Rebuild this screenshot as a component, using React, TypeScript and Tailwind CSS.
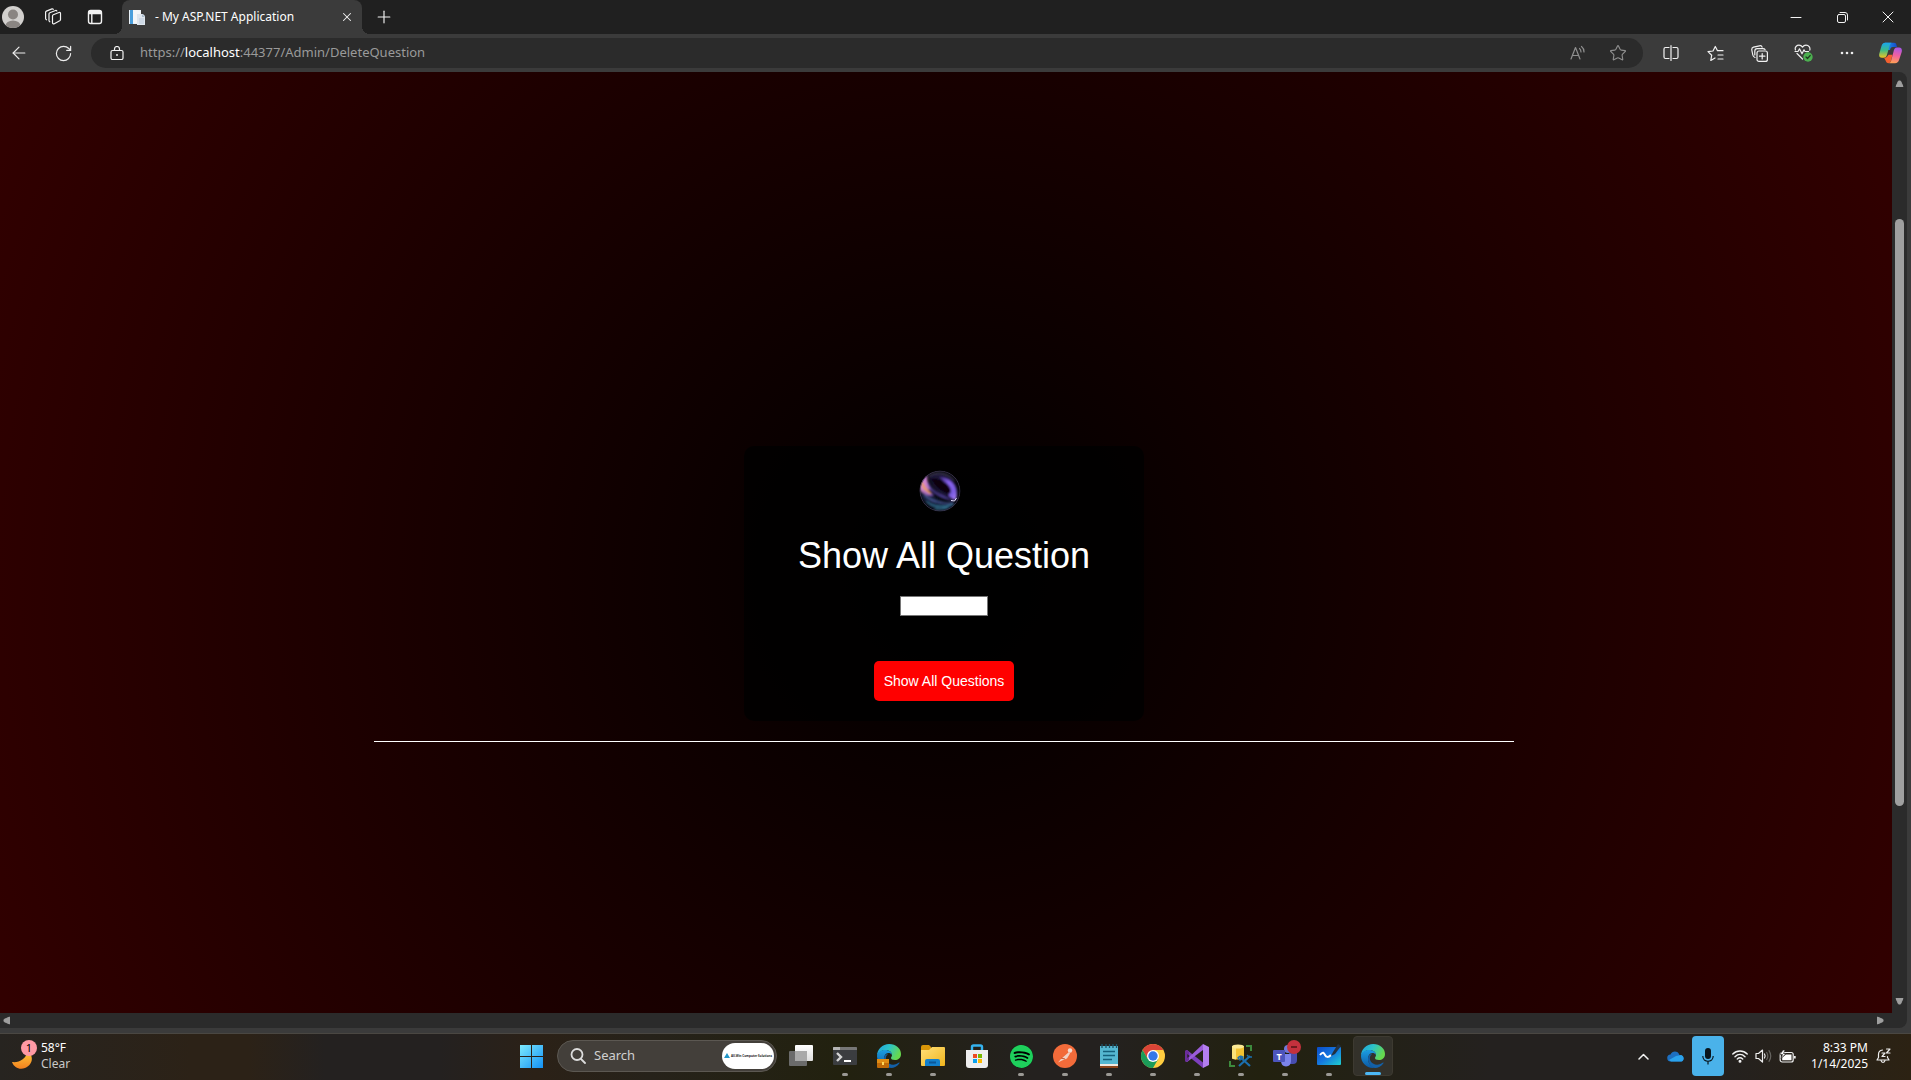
import React from 'react';
import { ArrowLeft, RotateCw, Plus, X, Star } from 'lucide-react';
import { SiSpotify } from 'react-icons/si';

const Svg = ({ children, size = 16, box = 24, color = '#f2f2f2', w = 1.5 }: { children: React.ReactNode; size?: number; box?: number; color?: string; w?: number }) => (
  <svg width={size} height={size} viewBox={`0 0 ${box} ${box}`} fill="none" stroke={color} strokeWidth={w} strokeLinecap="round" strokeLinejoin="round" className="block shrink-0">
    {children}
  </svg>
);

const barButton = 'flex h-full w-11 shrink-0 items-center justify-center text-[#f2f2f2]';

function TitleBar() {
  return (
    <header className="flex h-[34px] bg-[#202020] pr-px">
      <button aria-label="Profile" className="flex w-[26px] items-center justify-center">
        <svg width="22" height="22" viewBox="0 0 22 22" className="block">
          <defs><clipPath id="face"><circle cx="11" cy="11" r="11" /></clipPath></defs>
          <g clipPath="url(#face)">
            <rect width="22" height="22" fill="#d2d0ce" />
            <circle cx="11" cy="8.5" r="5" fill="#8a8582" />
            <ellipse cx="11" cy="20" rx="7.5" ry="5.5" fill="#8a8582" />
          </g>
        </svg>
      </button>
      <button aria-label="Workspaces" className="flex w-[54px] items-center justify-center">
        <Svg size={18} box={18} w={1.2}>
          <path d="M8.500 8c0-.6.300-1 .8-1.200l5.700-2.300c.8-.3 1.500.1 1.500.9v6c0 .6-.300 1-.8 1.300l-5.400 3c-.9.4-1.800 0-1.800-1z" />
          <path d="M5.800 13.800c-.6-.3-.8-.7-.8-1.300V6c0-.6.300-1 .8-1.200l5.700-2.300c.6-.2 1 0 1.300.4M2.500 11.800c-.6-.3-.9-.7-.9-1.300V4.300c0-.6.300-1 .8-1.200L8 .9c.6-.2 1 0 1.300.4" />
        </Svg>
      </button>
      <button aria-label="Tab actions" className="flex w-[30px] items-center justify-center">
        <Svg size={16} box={16} w={1.4}>
          <rect x="1.5" y="1.5" width="13" height="13" rx="2.2" />
          <path d="M2 2.5h12v2H2z" fill="#f2f2f2" />
          <path d="M4.800 5v9" />
        </Svg>
      </button>
      <div className="relative ml-3 flex w-60 items-center rounded-t-lg bg-[#3b3b3b] pr-2 pl-[7px]">
        <span className="absolute bottom-0 -left-2 size-2 bg-[radial-gradient(circle_at_0_0,#202020_8px,#3b3b3b_8px)]" />
        <span className="absolute -right-2 bottom-0 size-2 bg-[radial-gradient(circle_at_100%_0,#202020_8px,#3b3b3b_8px)]" />
        <svg width="17" height="17" viewBox="0 0 17 17" className="shrink-0">
          <rect x="0" y="1" width="12" height="14" fill="#e9f1f8" />
          <rect x="1" y="1" width="3" height="14" fill="#4a9edb" />
          <path d="M4 1h6l2 2v11H4z" fill="#f4f6f8" />
          <path d="M8 5h6l2 2v9H8z" fill="#dfe6ee" />
          <path d="M13 5v3h3z" fill="#a9bccd" />
          <path d="M10 10h5M10 12h5M10 14h5" stroke="#bccbdc" />
        </svg>
        <span className="ml-[9px] flex-1 text-xs whitespace-pre text-white">- My ASP.NET Application</span>
        <button aria-label="Close tab" className="text-[#f2f2f2]"><X size={14} strokeWidth={1.8} /></button>
      </div>
      <button aria-label="New tab" className={barButton}><Plus size={20} strokeWidth={1.4} /></button>
      <div className="ml-auto flex">
        <button aria-label="Minimize" className={barButton}><Svg size={12} box={12} w={1}><path d="M1 6.500h10" /></Svg></button>
        <button aria-label="Restore" className="flex h-full w-12 items-center justify-center">
          <Svg size={11} box={11} w={1}><rect x=".5" y="2.500" width="8" height="8" rx="1.500" /><path d="M3 .5h5a2.500 2.500 0 0 1 2.500 2.500v5" /></Svg>
        </button>
        <button aria-label="Close" className={barButton}><Svg size={12} box={12} w={1}><path d="m1 1 10 10M11 1 1 11" /></Svg></button>
      </div>
    </header>
  );
}

function Copilot() {
  return (
    <svg width="23" height="22" viewBox="0 0 23 22" className="block">
      <defs>
        <linearGradient id="cpa" x1="0" y1="0" x2="0" y2="1"><stop stopColor="#18a5ee" /><stop offset=".5" stopColor="#3dbb86" /><stop offset="1" stopColor="#eec421" /></linearGradient>
        <linearGradient id="cpb" x1=".6" y1="0" x2=".4" y2="1"><stop stopColor="#a957e8" /><stop offset=".5" stopColor="#f0609e" /><stop offset="1" stopColor="#ff9f56" /></linearGradient>
        <linearGradient id="cpc" x1="0" y1="0" x2="1" y2="0"><stop stopColor="#1fa4f0" /><stop offset="1" stopColor="#1546c8" /></linearGradient>
      </defs>
      <path d="M6 .7h9c2 0 2.500 1.500 3 4.300h-4c-2 0-2.500 1-3 3H8z" fill="url(#cpc)" />
      <path d="M6 .7h6.500c-1.500 1-2 3-2.500 5l-2 7c-.5 2-1.500 3-3.500 3H3C.5 15.700-.3 14 .3 11.500L2.500 4C3 2 4 .7 6 .7z" fill="url(#cpa)" />
      <path d="M5 15.700c3 0 3.500-1.500 4.500-3h4l-1.500 6c-.5 1.700-1.500 2.500-2.500 2.500-2.500 0-2.500-3-4.500-5.500z" fill="#f4602f" />
      <path d="M18 5.500h2c2.500 0 3.300 2 2.700 4.500l-2.500 7.500c-.8 2.500-2 3.700-4.200 3.700h-6c1.500-.5 2-2 2.500-4l2-7.500c.5-2.200 1.200-4.200 3.500-4.200z" fill="url(#cpb)" />
    </svg>
  );
}

function Toolbar() {
  return (
    <nav className="flex h-[38px] items-center bg-[#3b3b3b]">
      <button aria-label="Back" className="flex w-[38px] justify-center text-[#eee]"><ArrowLeft size={20} strokeWidth={1.4} /></button>
      <button aria-label="Reload" className="flex w-[50px] justify-center text-[#eee]"><RotateCw size={19} strokeWidth={1.5} /></button>
      <div className="ml-[3px] flex h-[30px] flex-1 items-center rounded-full bg-[#2b2b2b] pr-4 pl-[19px]">
        <Svg size={14} box={14} w={1.2}>
          <rect x="1" y="4.500" width="12" height="9" rx="1.500" /><path d="M4.500 4.500V3a2.500 2.500 0 0 1 5 0v1.500" /><circle cx="7" cy="9" r=".4" />
        </Svg>
        <a href="#" className="ml-4 flex-1 text-[13px] text-[#9a9a9a]">https://<span className="text-white">localhost</span>:44377/Admin/DeleteQuestion</a>
        <button aria-label="Read aloud" className="mr-[23px]">
          <Svg size={16} box={16} color="#8f8f8f" w={1.200}><path d="M1 14 5.500 2.500 10 14M2.500 10.500h6M9.500 3.500c1 .8 1.500 2 1.500 3.500M11.500 1.500c1.700 1.300 2.500 3 2.500 5.500" /></Svg>
        </button>
        <button aria-label="Add to favorites" className="text-[#8f8f8f]"><Star size={18} strokeWidth={1.5} /></button>
      </div>
      <div className="flex items-center">
        <button aria-label="Split screen" className="ml-[6px] flex w-11 justify-center">
          <Svg size={16} box={16} w={1.200}><path d="M6 2.500H2.500A1.500 1.500 0 0 0 1 4v8a1.500 1.500 0 0 0 1.500 1.500H6M10 2.500h3.500A1.500 1.500 0 0 1 15 4v8a1.500 1.500 0 0 1-1.500 1.500H10M8 .6v14.800" /></Svg>
        </button>
        <button aria-label="Favorites" className="flex w-11 justify-center">
          <Svg size={17} box={17} w={1.200}><path d="M10.500 5.700 8.300 1.500 6 6 1 6.600l3.700 3.600-.9 5.300L8 13M10.500 5.700H16M11 10h5M11 14h5" /></Svg>
        </button>
        <button aria-label="Collections" className="flex w-11 justify-center">
          <Svg size={17} box={17} w={1.200}><rect x="6" y="6" width="10.400" height="10.400" rx="2" /><path d="M11.200 8.500v5.400M8.500 11.200h5.400M4 12.500C2.500 12 2 11 1.800 10L.8 5C.6 3.500 1 2.600 2.500 2.200L8.500.8c1.300-.3 2.300.2 2.600 1.400M3.800 10V6c0-1.600.9-2.400 2.400-2.400h5.500c1.200 0 2 .3 2.300 1" /></Svg>
        </button>
        <button aria-label="Browser essentials" className="flex w-11 justify-center">
          <svg width="19" height="18" viewBox="0 0 19 18" fill="none" stroke="#eee" strokeWidth="1.200" strokeLinecap="round" strokeLinejoin="round">
            <path d="M1.500 6C.3 3 3 1.200 5 1.200c1.600 0 2.700.8 3.500 2 .8-1.200 2-2 3.500-2 2.700 0 4.500 2.300 3.800 5M3 9.500l5.500 5.500M1 7.500h3l1.500-2.700 2.500 5 2-4 1 1.700h3.500" />
            <circle cx="14" cy="13" r="4.700" fill="#4caf50" stroke="none" /><path d="m12 13 1.500 1.500 2.700-3" stroke="#1e3b1f" />
          </svg>
        </button>
        <button aria-label="More" className="flex w-11 justify-center"><svg width="14" height="4" viewBox="0 0 14 4" fill="#eee"><circle cx="2" cy="2" r="1.300" /><circle cx="7" cy="2" r="1.300" /><circle cx="12" cy="2" r="1.300" /></svg></button>
        <button aria-label="Copilot" className="flex w-[42px] justify-center"><Copilot /></button>
      </div>
    </nav>
  );
}

function Orb() {
  return (
    <svg width="42" height="42" viewBox="0 0 42 42" className="block">
      <defs>
        <clipPath id="orb"><circle cx="21" cy="21" r="20.500" /></clipPath>
        <linearGradient id="oa" x1="0" y1="0" x2="1" y2="1"><stop stopColor="#3d2a78" /><stop offset=".4" stopColor="#8a62f4" /><stop offset=".75" stopColor="#7a5ce0" /><stop offset="1" stopColor="#b98cff" /></linearGradient>
        <linearGradient id="ob" x1="0" y1="0" x2="1" y2="1"><stop stopColor="#b878f0" /><stop offset=".4" stopColor="#d486c8" /><stop offset="1" stopColor="#6a48b8" /></linearGradient>
        <filter id="soft" x="-20%" y="-20%" width="140%" height="140%"><feGaussianBlur stdDeviation=".8" /></filter>
      </defs>
      <g clipPath="url(#orb)">
        <rect width="42" height="42" fill="#08080f" />
        <g filter="url(#soft)" fill="none" strokeLinecap="round">
          <path d="M10 6C18 1 29 4 34 10s5 14 3 20C26 29 13 20 10 6z" fill="#1b1538" />
          <path d="M20 7c8 0 15 5 17 12 1 4 1 9-1 11-2-1-4-2-6-4 1-8-4-15-10-19z" fill="url(#oa)" />
          <path d="M12 9c8-2 18 4 20 11 0 3-1 4-3 4-7-2-14-8-17-15z" fill="#070611" />
          <path d="M1 21c2 12 13 19 23 19 5 0 9-3 12-7-13 0-26-6-30-18z" fill="#182441" />
          <path d="M8 5C3 9 0 15 1 20l5 4c3 2 6 2 10 1-5-5-8-11-8-20z" fill="url(#ob)" />
          <path d="M3 13c1 4 4 7 8 10" stroke="#f0a04a" strokeWidth="2" />
          <path d="M9 13c3 9 13 13 24 18" stroke="#5c4ab0" strokeWidth="1.500" />
          <path d="M10 20c5 6 14 9 22 11" stroke="#0a0914" strokeWidth="1.500" />
          <path d="M6 25c6 7 18 9 28 8" stroke="#4d5c9c" strokeWidth="1.200" />
          <path d="M8 32c7 6 17 6 26 2M16 39c5 1 9 0 13-2" stroke="#3e8fae" />
          <path d="M10 6c7-5 18-4 25 4" stroke="#4e4a62" />
        </g>
        <path d="M32 30.500 35.500 31l2-3" stroke="#e8e4ff" strokeWidth="1" fill="none" />
        <circle cx="21" cy="21" r="20" fill="none" stroke="#4b415f" strokeWidth=".7" />
      </g>
    </svg>
  );
}

function Arrow({ className, d }: { className: string; d: string }) {
  return <svg width="9" height="9" viewBox="0 0 9 9" fill="#9f9f9f" stroke="#9f9f9f" strokeLinejoin="round" className={className}><path d={d} /></svg>;
}

function Page() {
  return (
    <div className="flex min-h-0 flex-1 flex-col bg-[#3b3b3b] pr-1 pb-[5px]">
      <div className="flex min-h-0 flex-1">
        <main className="flex flex-1 flex-col items-center bg-[radial-gradient(circle_1075px_at_50%_500px,#000,#300)] pt-[374px] pr-1 font-['Liberation_Sans',sans-serif]">
          <form className="flex w-[400px] flex-col items-center rounded-[10px] bg-black/80 px-5 pt-6 pb-5" onSubmit={(e) => e.preventDefault()}>
            <div className="mr-2"><Orb /></div>
            <h1 className="mt-6 text-4xl leading-10 text-white"><label htmlFor="question">Show All Question</label></h1>
            <input id="question" className="mt-5 h-5 w-[88px] border border-[#767676] bg-white px-1 text-sm text-black" />
            <button className="mt-[45px] h-10 rounded-[5px] bg-[#f00] px-[10px] text-sm text-white">Show All Questions</button>
          </form>
          <hr className="mt-5 h-px w-full max-w-[1140px] border-0 bg-white" />
        </main>
        <div className="flex w-[15px] flex-col items-center rounded-tr-lg bg-[#2b2b2b] py-[7px]">
          <Arrow className="shrink-0" d="M1 7.500h7L5.500 2h-2z" />
          <div className="mt-[131px] h-[587px] w-[9px] rounded-full bg-[#9f9f9f]" />
          <Arrow className="mt-auto shrink-0" d="M1 1.500h7L5.500 7h-2z" />
        </div>
      </div>
      <div className="flex h-[15px] items-center justify-between rounded-br-lg bg-[#2b2b2b] pr-[22px] pl-[2px]">
        <Arrow className="" d="M7.500 1v7L2 5.500v-2z" />
        <Arrow className="" d="M1.500 1v7L7 5.500v-2z" />
      </div>
    </div>
  );
}

function EdgeIcon() {
  return (
    <svg width="24" height="24" viewBox="0 0 24 24" className="block">
      <defs>
        <linearGradient id="ea" x1="0" y1="0" x2="1" y2=".4"><stop stopColor="#1fa0e0" /><stop offset=".5" stopColor="#2cc3c8" /><stop offset="1" stopColor="#66d94e" /></linearGradient>
        <linearGradient id="eb" x1="0" y1="0" x2="0" y2="1"><stop stopColor="#1b9de2" /><stop offset="1" stopColor="#0c59a4" /></linearGradient>
      </defs>
      <path d="M0 12C0 5 5.500 0 12.200 0 19 0 24 4.500 24 10c0 4-3 6-6 6-2.800 0-4-1-4-2s1-1.500 1-3c0-2.500-2.500-5-6.500-5S1 8.500 0 12z" fill="url(#ea)" />
      <path d="M0 12c.5-4 4-6 8-6 4.500 0 7 2.500 7 5-1-1.500-2-2-3.500-2C8.500 9 7 12 7 15c0 4 3 7.500 7 8.800C6 25 0 19 0 12z" fill="url(#eb)" />
      <path d="M11 10c-3 2-3 7 1 9.500 3.500 2.200 7.500 1 10-1 .5-.3.8.2.6.5C20.500 22.500 17 24 14 24c-4-1-7-5-7-9 0-3 1.500-5.200 4-5z" fill="#1360a8" />
    </svg>
  );
}

const S = ({ children }: { children: React.ReactNode }) => <svg width="24" height="24" viewBox="0 0 24 24" className="block overflow-visible">{children}</svg>;

const apps: { name: string; dot?: boolean; active?: boolean; icon: React.ReactNode }[] = [
  { name: 'Task view', icon: <S><defs><linearGradient id="tv" x1="0" y1="0" x2="0" y2="1"><stop stopColor="#fff" /><stop offset="1" stopColor="#ddd" /></linearGradient></defs><rect x="6" y="1" width="18" height="16" rx="1" fill="url(#tv)" /><rect y="7" width="18" height="15" rx="1" fill="#6b6b6b" /><path d="M6 7h12v10H6z" fill="#a9a9a9" /></S> },
  { name: 'Terminal', dot: true, icon: <S><rect y="3" width="24" height="18" rx="1" fill="#3b3d40" /><path d="M0 6V4q0-1 1-1h22q1 0 1 1v2z" fill="#777" /><path d="M0 6V4q0-1 1-1h6v3z" fill="#b5b5b5" /><path d="m4 9 4 4-4 4" fill="none" stroke="#d5d5d5" strokeWidth="2.400" /><path d="M11 17h7" stroke="#fff" strokeWidth="2" /></S> },
  { name: 'Edge work profile', dot: true, icon: <div className="relative"><EdgeIcon /><svg width="12" height="9" viewBox="0 0 12 9" className="absolute bottom-0 left-0"><rect width="12" height="9" rx="1" fill="#c06a08" /><rect width="12" height="4" fill="#e08c14" /><rect x="5" y="3" width="2" height="3" fill="#ffd75a" /></svg></div> },
  { name: 'File Explorer', dot: true, icon: <S><defs><linearGradient id="fe" x1="0" y1="0" x2="1" y2="1"><stop stopColor="#ffe07a" /><stop offset="1" stopColor="#f0b41c" /></linearGradient></defs><path d="M0 3q0-2 2-2h6l2 2v4H0z" fill="#d99608" /><path d="M0 6h8l3-3h12q1 0 1 1v17q0 1-1 1H1q-1 0-1-1z" fill="url(#fe)" /><path d="M4 22v-5q0-2 2-2h11q2 0 2 2v5z" fill="#1380cc" /><path d="M8 18.500h7" stroke="#0a579a" strokeWidth="2" /></S> },
  { name: 'Microsoft Store', icon: <S><path d="M7 6V3q0-1.500 1.500-1.500h7Q17 1.500 17 3v3" fill="none" stroke="#35b3f0" strokeWidth="2.400" /><path d="M1 6h22v15q0 3-3 3H4q-3 0-3-3z" fill="#eee" /><path d="M8 10h4v4H8z" fill="#ee4b22" /><path d="M13 10h4v4h-4z" fill="#78b800" /><path d="M8 15h4v4H8z" fill="#0aa2ee" /><path d="M13 15h4v4h-4z" fill="#ffb900" /></S> },
  { name: 'Spotify', dot: true, icon: <div className="flex size-[23px] items-center justify-center rounded-full bg-black"><SiSpotify size={23} color="#1ed05c" /></div> },
  { name: 'Postman', dot: true, icon: <S><circle cx="12" cy="12" r="12" fill="#f26b3a" /><circle cx="17" cy="6.500" r="2.200" fill="#f3ddd4" /><path d="m16 8-8 7-3 3.500 4-2 5-2 3-5z" fill="#f0d2c5" /><path d="m8 14 4 1" stroke="#c9532a" /></S> },
  { name: 'Notepad', dot: true, icon: <S><path d="M3 20h18v4H3z" fill="#8c451b" /><path d="M3 18h18v4H3z" fill="#f1e8df" /><rect x="3" y="2" width="18" height="18" fill="#55b7d1" /><path d="M5 0v4M9 0v4M12.500 0v4M16 0v4M19.500 0v4" stroke="#1c5367" strokeWidth="1.300" /><path d="M6 7.500h12M6 11.500h12M6 15.500h9" stroke="#14607c" strokeWidth="1.600" /></S> },
  { name: 'Chrome', dot: true, icon: <S><circle cx="12" cy="12" r="12" fill="#ffcd40" /><path d="M1.600 6a12 12 0 0 1 20.800 0H12L6.800 15z" fill="#da4437" /><path d="M1.600 6a12 12 0 0 0 10.400 18L17.200 15H6.800z" fill="#1b9c59" /><circle cx="12" cy="12" r="6" fill="#fff" /><circle cx="12" cy="12" r="4.700" fill="#3577e8" /></S> },
  { name: 'Visual Studio', dot: true, icon: <S><path d="M0 7 2 6l16 12.500V24L2 11z" fill="#7d3fbd" /><path d="M18 0v6L2 18l-2-1z" fill="#9a5cd8" /><path d="M0 7 2 6l2 1.500V16L2 18l-2-1z" fill="#6a2d9b" /><path d="M2.300 10v4L4.500 12z" fill="#24211f" /><path d="M18 0 24 3v18l-6 3z" fill="#b47ef0" /></S> },
  { name: 'SQL Server Management Studio', dot: true, icon: <S><path d="M3 2v12c0 2 12 2 12 0V2z" fill="#f2c232" /><path d="M3 2v12c0 1 2 1.400 4 1.500V3z" fill="#f9e17a" /><ellipse cx="9" cy="2.500" rx="6" ry="2" fill="#fbe995" /><path d="M17 2h5v5M6 22H1v-5" stroke="#3d8a3d" strokeWidth="2" fill="none" /><path d="m10 22 11-10M11 13l10 9" stroke="#1b6fae" strokeWidth="2.200" /><path d="M9 14q2-3 5-1l-3 3zM18 11l2 2h3" stroke="#1b6fae" strokeWidth="1.400" fill="none" /></S> },
  { name: 'Teams', dot: true, icon: <S><circle cx="15" cy="5" r="4" fill="#7078d8" /><path d="M16 9h8v7q0 4-4 4h-4z" fill="#474db0" /><path d="M8 10h10v7q0 5-5 5.500Q8 22 8 17z" fill="#7b83eb" /><rect y="6" width="12" height="12" rx="1" fill="#4c55bd" /><text x="6" y="15.500" textAnchor="middle" fontSize="9" fontWeight="700" fill="#fff" fontFamily="Open Sans">T</text><circle cx="21" cy="3" r="7" fill="#c4313d" /><path d="M18 3h6" stroke="#5b1519" strokeWidth="1.600" /></S> },
  { name: 'Whiteboard', dot: true, icon: <S><defs><linearGradient id="wb" x1="0" y1="0" x2="1" y2="1"><stop stopColor="#0b4cc8" /><stop offset=".5" stopColor="#1578e0" /><stop offset="1" stopColor="#1fd0d0" /></linearGradient></defs><rect y="3" width="24" height="18" rx="1" fill="url(#wb)" /><path d="M3 11c3-4 4-2 5 0s3 3 6 0" stroke="#fff" strokeWidth="2" fill="none" /><path d="m14 12 2-4 5-8 3 2-6 8z" fill="#23313f" /></S> },
  { name: 'Microsoft Edge', active: true, icon: <EdgeIcon /> },
];

function Taskbar() {
  return (
    <footer className="flex h-[47px] shrink-0 items-center border-t border-[#4a4742] bg-[linear-gradient(90deg,#272420_0%,#2c2217_10%,#2c2217_13%,#242120_17%,#242120_23%,#2b2117_28%,#26221a_34%,#22210f_44%,#24211f_54%,#24211f_58%,#22210f_66%,#24211f_78%,#24211f_90%,#2c2213_100%)] pb-[2px] text-xs text-white">
      <div className="flex flex-1 items-center pr-6">
        <button className="flex items-center gap-1 pl-[11px] text-left">
          <span className="relative block h-8 w-[26px]">
            <svg width="22" height="22" viewBox="0 0 22 22" className="absolute bottom-[2px] left-0"><defs><linearGradient id="mn" x1="0" y1="0" x2="0" y2="1"><stop stopColor="#ffcb3b" /><stop offset="1" stopColor="#f3801e" /></linearGradient></defs><path d="M17 3c6 5 5 14-3 17-5 2-11 0-13-6 7 1 14-3 16-11z" fill="url(#mn)" /></svg>
            <span className="absolute top-0 right-0 flex size-4 items-center justify-center rounded-full bg-[#ff99a4] text-[11px] leading-4 text-black">1</span>
          </span>
          <span className="flex flex-col leading-4"><span>58°F</span><span className="text-[#c8c8c8]">Clear</span></span>
        </button>
      </div>
      <div className="flex h-full items-center">
        <button aria-label="Start" className="mr-[14px]"><svg width="23" height="23" viewBox="0 0 23 23" className="block"><defs><linearGradient id="ws" gradientUnits="userSpaceOnUse" x1="0" y1="0" x2="23" y2="23"><stop stopColor="#7deafd" /><stop offset="1" stopColor="#1391f5" /></linearGradient></defs><path d="M0 0h11v11H0zM12 0h11v11H12zM0 12h11v11H0zM12 12h11v11H12z" fill="url(#ws)" /></svg></button>
        <div className="mr-[2px] flex h-8 w-[220px] items-center rounded-full border border-[#5c5852] bg-[#433f3a] pr-[2px] pl-3">
          <Svg size={16} box={16} w={1.800} color="#dcdcdc"><circle cx="7" cy="6.500" r="5.500" /><path d="m11 11 4 4" /></Svg>
          <input aria-label="Search" placeholder="Search" className="ml-2 w-0 flex-1 bg-transparent text-[13px] outline-none placeholder:text-[#d0d0d0]" />
          <div className="flex h-[26px] w-[52px] items-center justify-center gap-px rounded-full bg-white">
            <svg width="6" height="6" viewBox="0 0 6 6"><path d="M0 5 3 0l3 5z" fill="#2196c8" /></svg>
            <span className="text-[3px] leading-none font-bold whitespace-nowrap text-[#222]">All-Win Computer Solutions</span>
          </div>
        </div>
        {apps.map((a) => (
          <button key={a.name} aria-label={a.name} className="flex w-11 justify-center">
            <span className={a.active ? 'relative flex h-10 w-10 items-center justify-center rounded-sm border border-[#3d3a31] bg-[#33312a]' : 'relative flex h-10 w-10 items-center justify-center'}>
              {a.icon}
              {a.dot && <span className="absolute bottom-0 h-[3px] w-[6px] rounded-full bg-[#9b9995]" />}
              {a.active && <span className="absolute bottom-0 h-[3px] w-4 rounded-full bg-[#4cb8f5]" />}
            </span>
          </button>
        ))}
      </div>
      <div className="flex h-full flex-1 items-center justify-end pr-5">
        <button aria-label="Show hidden icons" className="mr-[18px]"><Svg size={11} box={11} w={1.500}><path d="m1 8 4.500-4.500L10 8" /></Svg></button>
        <button aria-label="OneDrive" className="mr-2"><svg width="17" height="11" viewBox="0 0 17 11"><path d="M4 10.500a3.500 3.500 0 0 1-.5-7C5-.5 11-.8 12.500 4c5 0 5.500 6.500 1 6.500z" fill="#1d6fc0" /><path d="m2 9 7-4 5-1c3.500 1 3.500 6 0 6.500H4z" fill="#2ba3ec" /></svg></button>
        <button aria-label="Microphone" className="flex h-10 w-8 items-center justify-center rounded-[4px] bg-[#4ab2ea]">
          <svg width="12" height="17" viewBox="0 0 12 17"><rect x="3" y="0" width="6" height="11" rx="3" fill="#08141c" /><path d="M.8 8c0 7 10.400 7 10.400 0M6 13v3.500" stroke="#08141c" strokeWidth="1.200" fill="none" /></svg>
        </button>
        <button aria-label="Network, volume and battery" className="ml-2 flex items-center gap-[7px]">
          <Svg size={16} box={16} w={1.400}><path d="M.8 6c4-4 10.400-4 14.400 0M3 8.700c3-3 7-3 10 0M5.300 11c1.700-1.500 3.700-1.500 5.400 0" /><circle cx="8" cy="13.300" r=".8" fill="#fff" /></Svg>
          <svg width="17" height="14" viewBox="0 0 17 14" fill="none" stroke="#eee" strokeWidth="1.200" strokeLinejoin="round" strokeLinecap="round"><path d="M1 4.500v5h2.500L7.500 13V1l-4 3.500zM9.500 5q1.300 2 0 4" /><path d="M11.700 3.500q2.200 3.500 0 7M14 1.700q3.500 5.300 0 10.600" stroke="#66645f" /></svg>
          <svg width="17" height="13" viewBox="0 0 17 13" fill="none" stroke="#eee" strokeWidth="1.200"><rect x="1.200" y="2.500" width="13" height="9.500" rx="2" /><path d="M3.200 7.500 7 4.500h5.500v5.700H3.200z" fill="#fff" stroke="none" /><path d="M15.800 6v2.500" strokeWidth="1.800" /><path d="M4 0 1 4.500h2.500L2 8.500l5-5H4.500L6 0z" fill="#fff" stroke="#24211f" strokeWidth=".6" /></svg>
        </button>
        <div className="ml-[15px] text-right leading-4"><div>8:33 PM</div><div>1/14/2025</div></div>
        <button aria-label="Notifications" className="ml-2">
          <svg width="15" height="16" viewBox="0 0 15 16" fill="none" stroke="#eee" strokeWidth="1.200" strokeLinecap="round" strokeLinejoin="round"><path d="M6.500 2C4 2.300 2.500 4 2.500 6.500v3L1 12h12l-1.500-2.500V8.500M5 12.500c.5 2.500 3.500 2.500 4 0M6 5h3L6 8.500h3M10.500 1H14l-3.500 4H14" /></svg>
        </button>
      </div>
    </footer>
  );
}

export default function App() {
  return (
    <div className="flex h-screen min-h-[800px] flex-col overflow-hidden font-['Noto_Sans',sans-serif]">
      <TitleBar />
      <Toolbar />
      <Page />
      <Taskbar />
    </div>
  );
}
